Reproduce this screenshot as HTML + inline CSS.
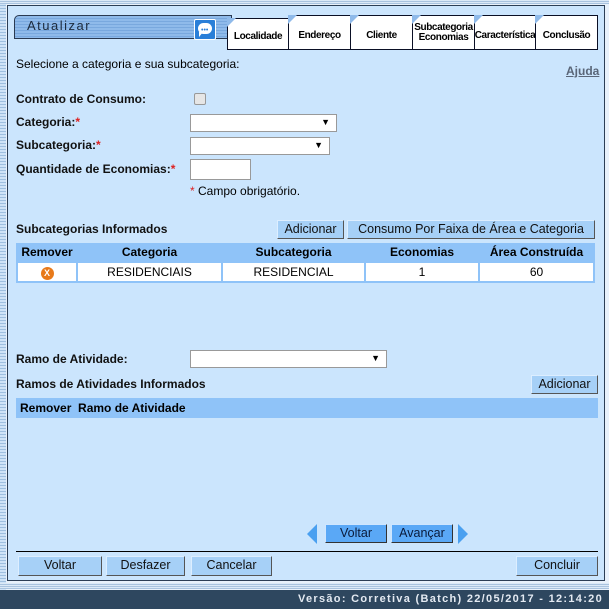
<!DOCTYPE html>
<html><head><meta charset="utf-8"><style>
*{margin:0;padding:0;box-sizing:border-box}
body{width:609px;height:609px;position:relative;background:#e8f1fb;font-family:"Liberation Sans",Arial,sans-serif;font-size:12px;color:#000;overflow:hidden}
.a{position:absolute}
.strip{left:0;top:0;width:6px;height:590px;background:repeating-linear-gradient(#cfe3f7 0 2px,#9fbfdf 2px 3px)}
.panel{left:7px;top:5px;width:598px;height:576px;background:#cbe5fd;border:1px solid #2c3e55}
.bar{left:14px;top:15px;width:218px;height:24px;background:repeating-linear-gradient(#8fbaea 0 2px,#79a8de 2px 3px);border:1px solid #2a3a52;border-radius:5px 0 0 0;font-size:13px;letter-spacing:1.5px;color:#1c2a3c;padding:2px 0 0 12px}
.tab{top:15px;height:35px;background:#fff;border:1px solid #0a0f25;font-weight:bold;font-size:10px;letter-spacing:-0.4px;display:flex;align-items:center;justify-content:center;text-align:center;line-height:10px;padding-top:6px;white-space:nowrap}
.tab:before{content:"";position:absolute;left:-1px;top:-1px;border-top:9px solid #8fbaea;border-right:9px solid transparent}
.lb{font-size:12px;color:#111;font-weight:bold}
.req{color:#d22}
.sel{background:#fff;border:1px solid #999;height:18px}
.sel:after{content:"▼";position:absolute;right:6px;top:2px;font-size:9px}
.btn{background:#a6d0f7;border:1px solid #555;border-top-color:#ddeeff;border-left-color:#ddeeff;text-align:center;font-size:12.5px;color:#111;line-height:17px}
.btnd{background:#5aa8f6;border:1px solid #333;border-top-color:#cfe6ff;border-left-color:#cfe6ff;text-align:center;font-size:12.5px;line-height:16px;color:#0a1a3a}
table{border-collapse:collapse}
td,th{font-size:12px;text-align:center}
</style></head><body>
<div class="a strip"></div>
<div class="a" style="left:0;top:0;width:609px;height:4px;background:repeating-linear-gradient(#dbe9f7 0 1px,#a9c3df 1px 2px)"></div>
<div class="a panel"></div>
<div class="a bar">Atualizar</div>
<div class="a" style="left:194px;top:19px;width:22px;height:21px;background:#2a7fd8;border:1px solid #fff;border-radius:2px"><div class="a" style="left:3px;top:3px;width:14px;height:11px;background:#fff;border-radius:6px"></div><div class="a" style="left:4px;top:12px;border-top:5px solid #fff;border-right:4px solid transparent"></div><div class="a" style="left:6px;top:7px;font-size:7px;color:#2a7fd8;letter-spacing:0">•••</div></div>
<div class="a tab" style="left:227px;width:62px;top:18px;height:32px">Localidade</div>
<div class="a tab" style="left:288px;width:63px">Endereço</div>
<div class="a tab" style="left:350px;width:63px">Cliente</div>
<div class="a tab" style="left:412px;width:63px;padding-top:0">Subcategoria<br>Economias</div>
<div class="a tab" style="left:474px;width:62px">Característica</div>
<div class="a tab" style="left:535px;width:63px">Conclusão</div>
<div class="a" style="left:16px;top:57px">Selecione a categoria e sua subcategoria:</div>
<div class="a" style="left:566px;top:64px;font-size:12px;font-weight:bold;color:#5a6678;text-decoration:underline">Ajuda</div>
<div class="a lb" style="left:16px;top:92px">Contrato de Consumo:</div>
<div class="a" style="left:194px;top:93px;width:12px;height:12px;border:1px solid #999;border-radius:2px;background:#e6e6e6"></div>
<div class="a lb" style="left:16px;top:115px">Categoria:<span class="req">*</span></div>
<div class="a sel" style="left:190px;top:114px;width:147px"></div>
<div class="a lb" style="left:16px;top:138px">Subcategoria:<span class="req">*</span></div>
<div class="a sel" style="left:190px;top:137px;width:140px"></div>
<div class="a lb" style="left:16px;top:162px">Quantidade de Economias:<span class="req">*</span></div>
<div class="a" style="left:190px;top:159px;width:61px;height:21px;background:#fff;border:1px solid #999"></div>
<div class="a" style="left:190px;top:184px"><span class="req">*</span> Campo obrigatório.</div>
<div class="a lb" style="left:16px;top:222px">Subcategorias Informados</div>
<div class="a btn" style="left:277px;top:220px;width:67px;height:19px">Adicionar</div>
<div class="a btn" style="left:347px;top:220px;width:248px;height:19px">Consumo Por Faixa de Área e Categoria</div>
<table class="a" style="left:16px;top:243px;width:579px;background:#8fc3f8">
<tr style="height:19px"><th style="width:60px">Remover</th><th style="width:145px">Categoria</th><th style="width:143px">Subcategoria</th><th style="width:114px">Economias</th><th>Área Construída</th></tr>
<tr style="height:20px"><td style="background:#fff;border:2px solid #8fc3f8"><span style="display:inline-block;width:13px;height:13px;border-radius:50%;background:#e87a1a;color:#fff;font-size:9px;line-height:13px;font-weight:bold">X</span></td><td style="background:#fff;border:2px solid #8fc3f8">RESIDENCIAIS</td><td style="background:#fff;border:2px solid #8fc3f8">RESIDENCIAL</td><td style="background:#fff;border:2px solid #8fc3f8">1</td><td style="background:#fff;border:2px solid #8fc3f8">60</td></tr>
</table>
<div class="a lb" style="left:16px;top:352px">Ramo de Atividade:</div>
<div class="a sel" style="left:190px;top:350px;width:197px"></div>
<div class="a lb" style="left:16px;top:377px">Ramos de Atividades Informados</div>
<div class="a btn" style="left:531px;top:375px;width:67px;height:19px">Adicionar</div>
<div class="a" style="left:16px;top:398px;width:582px;height:20px;background:#8fc3f8;font-weight:bold;padding:3px 0 0 4px">Remover&nbsp; Ramo de Atividade</div>
<div class="a" style="left:307px;top:524px;border-right:10px solid #4aa0f0;border-top:10px solid transparent;border-bottom:10px solid transparent"></div>
<div class="a btnd" style="left:325px;top:524px;width:62px;height:19px">Voltar</div>
<div class="a btnd" style="left:391px;top:524px;width:62px;height:19px">Avançar</div>
<div class="a" style="left:458px;top:524px;border-left:10px solid #4aa0f0;border-top:10px solid transparent;border-bottom:10px solid transparent"></div>
<div class="a" style="left:16px;top:551px;width:582px;height:1px;background:#000"></div>
<div class="a btn" style="left:18px;top:556px;width:84px;height:20px">Voltar</div>
<div class="a btn" style="left:106px;top:556px;width:79px;height:20px">Desfazer</div>
<div class="a btn" style="left:191px;top:556px;width:81px;height:20px">Cancelar</div>
<div class="a btn" style="left:516px;top:556px;width:82px;height:20px">Concluir</div>
<div class="a" style="left:0;top:583px;width:609px;height:6px;background:repeating-linear-gradient(#dbe9f7 0 1px,#a9c3df 1px 2px)"></div>
<div class="a" style="left:0;top:590px;width:609px;height:19px;background:#2e475f;color:#e4eaf2;font-weight:bold;font-size:11px;letter-spacing:1.3px;text-align:right;padding:3px 6px 0 0">Versão: Corretiva (Batch) 22/05/2017 - 12:14:20</div>
</body></html>
